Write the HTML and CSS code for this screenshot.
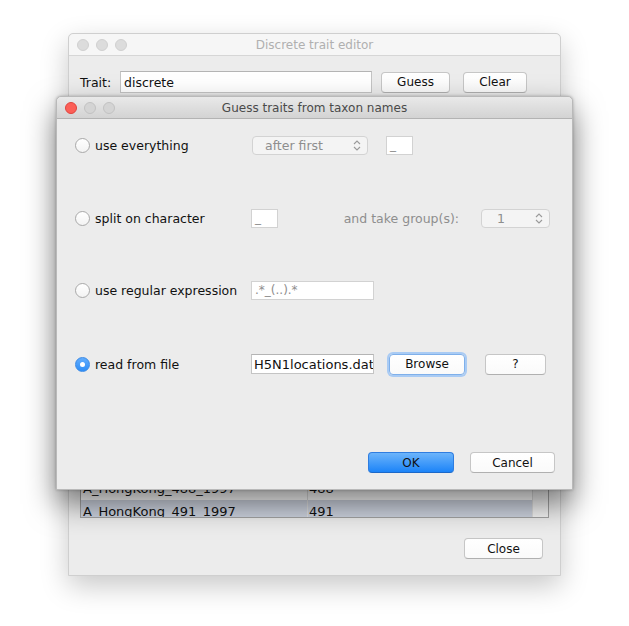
FILE: index.html
```html
<!DOCTYPE html>
<html>
<head>
<meta charset="utf-8">
<link rel="stylesheet" href="styles.css">
</head>
<body>
<div class="desk">
  <div class="win back">
    <div class="titlebar inactive">
      <div class="lights"><span class="light"></span><span class="light"></span><span class="light"></span></div>
      <div class="title">Discrete trait editor</div>
    </div>
    <div class="back-body">
      <div class="trait-row">
        <span class="lbl">Trait:</span>
        <div class="field trait-field">discrete</div>
        <div class="btn guess">Guess</div>
        <div class="btn clear">Clear</div>
      </div>
      <div class="table">
        <div class="rows">
          <div class="trow"><span class="c1">A_HongKong_488_1997</span><span class="c2">488</span></div>
          <div class="trow sel"><span class="c1">A_HongKong_491_1997</span><span class="c2">491</span></div>
        </div>
        <div class="scroll"></div>
      </div>
      <div class="close-row"><div class="btn close">Close</div></div>
    </div>
  </div>

  <div class="win front">
    <div class="titlebar active">
      <div class="lights"><span class="light red"></span><span class="light"></span><span class="light"></span></div>
      <div class="title">Guess traits from taxon names</div>
    </div>
    <div class="front-body">
      <div class="opt o1">
        <div class="opt-label"><span class="radio"></span><span class="olbl">use everything</span></div>
        <div class="combo wide"><span>after first</span>
          <svg class="chev" width="8" height="11" viewBox="0 0 8 11"><path d="M1 4 L4 1 L7 4 M1 7 L4 10 L7 7" fill="none" stroke="#9a9a9a" stroke-width="1.1"/></svg>
        </div>
        <div class="field small dis u1">_</div>
      </div>
      <div class="opt o2">
        <div class="opt-label"><span class="radio"></span><span class="olbl">split on character</span></div>
        <div class="field small dis">_</div>
        <span class="glbl">and take group(s):</span>
        <div class="combo spin"><span>1</span>
          <svg class="chev" width="8" height="11" viewBox="0 0 8 11"><path d="M1 4 L4 1 L7 4 M1 7 L4 10 L7 7" fill="none" stroke="#9a9a9a" stroke-width="1.1"/></svg>
        </div>
      </div>
      <div class="opt o3">
        <div class="opt-label"><span class="radio"></span><span class="olbl">use regular expression</span></div>
        <div class="field long dis regex">.*_(..).*</div>
      </div>
      <div class="opt o4">
        <div class="opt-label"><span class="radio on"></span><span class="olbl">read from file</span></div>
        <div class="field long file">H5N1locations.dat</div>
        <div class="btn browse">Browse</div>
        <div class="btn help">?</div>
      </div>
      <div class="actions">
        <div class="btn ok">OK</div>
        <div class="btn cancel">Cancel</div>
      </div>
    </div>
  </div>
</div>
</body>
</html>
```

FILE: styles.css
```css
* { box-sizing: border-box; }
html, body { margin: 0; padding: 0; background: #ffffff; }
body {
  font-family: "DejaVu Sans", "Liberation Sans", sans-serif;
  font-size: 12px;
  color: #111;
  width: 629px;
  height: 626px;
  overflow: hidden;
}
.desk { position: relative; width: 629px; height: 626px; }

.win {
  position: absolute;
  background: #ececec;
  border-radius: 5px 5px 0 0;
  display: flex;
  flex-direction: column;
}
.back {
  left: 68px; top: 33px; width: 493px; height: 543px;
  border: 1px solid #cfcfcf;
  box-shadow: 0 10px 28px rgba(0,0,0,0.22);
}
.front {
  left: 56px; top: 96px; width: 517px; height: 394px;
  border: 1px solid #b9b9b9;
  box-shadow: 0 14px 30px rgba(0,0,0,0.5), 0 0 3px rgba(0,0,0,0.25);
}

.titlebar {
  height: 22px;
  flex: none;
  position: relative;
  display: flex;
  align-items: center;
  justify-content: center;
  border-radius: 5px 5px 0 0;
}
.titlebar.inactive { background: #f6f6f6; border-bottom: 1px solid #d6d6d6; }
.titlebar.inactive .title { color: #b0b0b0; }
.titlebar.active { background: linear-gradient(#e9e9e9, #d3d3d3); border-bottom: 1px solid #b3b3b3; }
.titlebar.active .title { color: #4a4a4a; }
.title { font-size: 12px; line-height: 22px; }
.lights {
  position: absolute; left: 8px; top: 5px;
  display: flex; gap: 7px;
}
.light {
  width: 12px; height: 12px; border-radius: 50%;
  background: #dcdcdc; border: 1px solid #d0d0d0;
}
.active .light { background: #d4d4d4; border-color: #c2c2c2; }
.active .light.red { background: #fc5f57; border-color: #e0443e; }

/* back window */
.back-body {
  flex: 1;
  display: flex;
  flex-direction: column;
  padding: 15px 11px 16px 11px;
}
.trait-row { display: flex; align-items: center; height: 22px; }
.lbl { font-size: 12.5px; width: 40px; }
.field {
  background: #fff;
  border: 1px solid #c4c4c4;
  border-top-color: #b4b4b4;
  display: flex; align-items: center;
  padding-left: 3px;
  white-space: nowrap;
  overflow: hidden;
}
.trait-field { width: 252px; height: 22px; font-size: 12.5px; }
.btn {
  background: linear-gradient(#ffffff, #fafafa);
  border: 1px solid #c6c6c6;
  border-bottom-color: #b0b0b0;
  border-radius: 4px;
  display: flex; align-items: center; justify-content: center;
  font-size: 12px;
  height: 21px;
  color: #111;
}
.guess { width: 69px; margin-left: 9px; }
.clear { width: 64px; margin-left: 13px; }

.table {
  flex: 1;
  margin-top: 12px;
  border: 1px solid #a2a2a2;
  background: #fff;
  display: flex;
  overflow: hidden;
}
.rows {
  flex: 1;
  display: flex;
  flex-direction: column;
  justify-content: flex-end;
  margin-bottom: -6px;
}
.trow {
  height: 23px;
  flex: none;
  display: flex;
  font-size: 13px;
  line-height: 23px;
}
.trow.sel { background: #cdd3df; }
.c1 { width: 227px; padding-left: 2px; border-right: 1px solid #e0e0e0; }
.c2 { padding-left: 1px; }
.scroll { width: 16px; background: #f4f4f4; border-left: 1px solid #dedede; }
.close-row { display: flex; justify-content: flex-end; margin-top: 20px; padding-right: 6px; }
.close { width: 79px; }

/* front dialog */
.front-body {
  flex: 1;
  display: flex;
  flex-direction: column;
  padding: 15px 22px 16px 18px;
}
.opt {
  display: flex;
  align-items: center;
  height: 22px;
  flex: none;
}
.o1 { margin-bottom: 51px; }
.o2 { margin-bottom: 50px; }
.o3 { margin-bottom: 52px; }
.opt-label { width: 176px; display: flex; align-items: center; flex: none; }
.radio {
  width: 15px; height: 15px; border-radius: 50%;
  background: linear-gradient(#ffffff, #f3f3f3);
  border: 1px solid #a9a9a9;
  flex: none;
  position: relative;
}
.radio.on {
  background: linear-gradient(#62adfd, #2d8df7);
  border-color: #3a8ae6;
}
.radio.on::after {
  content: "";
  position: absolute; left: 4px; top: 4px;
  width: 5px; height: 5px; border-radius: 50%;
  background: #fff;
}
.olbl { font-size: 12.5px; margin-left: 5px; white-space: nowrap; }

.combo {
  height: 19px;
  border: 1px solid #d3d3d3;
  border-radius: 4px;
  background: #f4f4f4;
  color: #8e8e8e;
  font-size: 12.5px;
  display: flex; align-items: center;
  position: relative;
}
.combo .chev { position: absolute; right: 6px; top: 3px; }
.combo.wide { width: 116px; margin-left: 1px; padding-left: 12px; }
.combo.spin { width: 69px; padding-left: 15px; margin-left: 22px; }
.field.small { width: 27px; height: 19px; }
.field.dis { border-color: #d2d2d2; color: #8e8e8e; font-size: 12px; }
.u1 { margin-left: 18px; }
.glbl { color: #8e8e8e; font-size: 12.5px; margin-left: auto; white-space: nowrap; }
.field.long { width: 123px; }
.regex { height: 19px; font-size: 10.5px; }
.file { height: 20px; font-size: 13px; padding-left: 2px; }
.browse {
  width: 76px; margin-left: 15px;
  border-color: #7fb0ea;
  box-shadow: 0 0 0 2px #a9cbf4;
}
.help { width: 61px; margin-left: 20px; }

.actions {
  margin-top: auto;
  display: flex;
  justify-content: flex-end;
  gap: 16px;
  margin-right: -5px;
}
.ok {
  width: 86px;
  background: linear-gradient(#6cb4fb, #1c84f8);
  border-color: #2f7de0;
  border-bottom-color: #1c68c8;
}
.cancel { width: 85px; }
```
